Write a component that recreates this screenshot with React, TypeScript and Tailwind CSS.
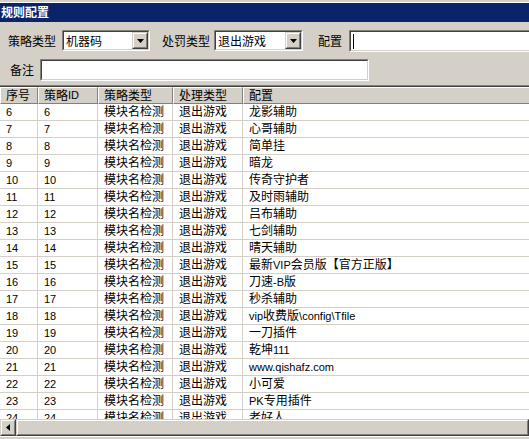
import React from "react";

const CJK = /([\u2E80-\u9FFF\u3000-\u303F\uFF00-\uFFEF]+)/;

function T({ s }: { s: string }) {
  const parts = s.split(CJK).filter((p) => p.length > 0);
  return (
    <>
      {parts.map((p, i) =>
        CJK.test(p) ? (
          <span key={i} className="text-[12px]">
            {p}
          </span>
        ) : (
          <span key={i} className="text-[11px]">
            {p}
          </span>
        )
      )}
    </>
  );
}

function Sunken({ className, children }: { className: string; children?: React.ReactNode }) {
  return (
    <div className={`border-t border-l border-t-[#808080] border-l-[#808080] border-b border-r border-b-white border-r-white ${className}`}>
      <div className="w-full h-full border-t border-l border-t-[#404040] border-l-[#404040] border-b border-r border-b-[#d4d0c8] border-r-[#d4d0c8] bg-white relative flex items-center">
        {children}
      </div>
    </div>
  );
}

function Raised({ className, children }: { className: string; children?: React.ReactNode }) {
  return (
    <div className={`border-t border-l border-t-[#d4d0c8] border-l-[#d4d0c8] border-b border-r border-b-[#404040] border-r-[#404040] ${className}`}>
      <div className="w-full h-full border-t border-l border-t-white border-l-white border-b border-r border-b-[#808080] border-r-[#808080] bg-[#d4d0c8] flex items-center justify-center">
        {children}
      </div>
    </div>
  );
}

function Combo({ value, w }: { value: string; w: string }) {
  return (
    <Sunken className={`${w} h-[21px] shrink-0`}>
      <span className="pl-[2px] leading-none flex-1 whitespace-nowrap">
        <T s={value} />
      </span>
      <Raised className="w-[16px] h-[17px] shrink-0">
        <svg width="7" height="4" viewBox="0 0 7 4">
          <path d="M0 0h7L3.5 4z" fill="#000" />
        </svg>
      </Raised>
    </Sunken>
  );
}

const widths = ["w-[38px]", "w-[60px]", "w-[75px]", "w-[70px]"];

const rows: [string, string][] = [
  ["6", "龙影辅助"],
  ["7", "心哥辅助"],
  ["8", "简单挂"],
  ["9", "暗龙"],
  ["10", "传奇守护者"],
  ["11", "及时雨辅助"],
  ["12", "吕布辅助"],
  ["13", "七剑辅助"],
  ["14", "晴天辅助"],
  ["15", "最新VIP会员版【官方正版】"],
  ["16", "刀速-B版"],
  ["17", "秒杀辅助"],
  ["18", "vip收费版\\config\\Tfile"],
  ["19", "一刀插件"],
  ["20", "乾坤111"],
  ["21", "www.qishafz.com"],
  ["22", "小可爱"],
  ["23", "PK专用插件"],
  ["24", "老好人"],
];

export default function App() {
  const font = { fontFamily: 'Tahoma, "Liberation Sans", "Noto Sans CJK SC", sans-serif' };
  return (
    <div
      className="w-[529px] h-[439px] overflow-hidden bg-[#d4d0c8] text-black flex flex-col"
      style={font}
    >
      <div className="h-[2px] bg-[#d4d0c8] shrink-0" />
      <div className="h-px bg-white shrink-0" />
      <div className="h-[19px] bg-[#0a246a] text-white font-bold text-[12px] flex items-center pl-[1px] shrink-0 whitespace-nowrap">
        规则配置
      </div>

      {/* form */}
      <div className="h-[8px] shrink-0" />
      <div className="h-[21px] flex items-center shrink-0">
        <span className="ml-[8px] w-[48px] shrink-0 whitespace-nowrap leading-none">
          <T s="策略类型" />
        </span>
        <div className="w-[6px] shrink-0" />
        <Combo value="机器码" w="w-[88px]" />
        <span className="ml-[12px] w-[48px] shrink-0 whitespace-nowrap leading-none">
          <T s="处罚类型" />
        </span>
        <div className="w-[4px] shrink-0" />
        <Combo value="退出游戏" w="w-[89px]" />
        <span className="ml-[15px] w-[24px] shrink-0 whitespace-nowrap leading-none">
          <T s="配置" />
        </span>
        <div className="w-[7px] shrink-0" />
        <Sunken className="w-[200px] h-[22px] shrink-0">
          <div className="absolute left-[2px] top-[2px] w-px h-[15px] bg-black" />
        </Sunken>
      </div>
      <div className="h-[8px] shrink-0" />
      <div className="h-[22px] flex items-center shrink-0">
        <span className="ml-[10px] w-[24px] shrink-0 whitespace-nowrap leading-none">
          <T s="备注" />
        </span>
        <div className="w-[6px] shrink-0" />
        <Sunken className="w-[329px] h-[22px] shrink-0" />
      </div>
      <div className="h-[4px] shrink-0" />

      {/* grid */}
      <div className="flex-1 flex flex-col border-t border-t-[#808080] min-h-0">
        <div className="flex-1 flex flex-col border-t border-t-[#404040] min-h-0">
          {/* header */}
          <div className="h-[17px] flex shrink-0 bg-[#d4d0c8]">
            {["序号", "策略ID", "策略类型", "处理类型"].map((h, i) => (
              <div
                key={h}
                className={`${widths[i]} shrink-0 h-full border-t border-l border-t-white border-l-white border-b border-r border-b-[#808080] border-r-[#808080] pl-[5px] flex items-center leading-none whitespace-nowrap`}
              >
                <T s={h} />
              </div>
            ))}
            <div className="flex-1 h-full border-t border-l border-t-white border-l-white border-b border-b-[#808080] pl-[5px] flex items-center leading-none whitespace-nowrap">
              <T s="配置" />
            </div>
          </div>
          {/* body */}
          <div className="flex-1 bg-white overflow-hidden min-h-0">
            {rows.map(([n, cfg]) => (
              <div key={n} className="h-[17px] flex border-b border-b-[#d4d0c8]">
                {[n, n, "模块名检测", "退出游戏"].map((c, i) => (
                  <div
                    key={i}
                    className={`${widths[i]} shrink-0 h-full border-r border-r-[#d4d0c8] pl-[6px] flex items-center leading-none whitespace-nowrap`}
                  >
                    <T s={c} />
                  </div>
                ))}
                <div className="flex-1 h-full pl-[6px] flex items-center leading-none whitespace-nowrap">
                  <T s={cfg} />
                </div>
              </div>
            ))}
          </div>
          {/* scrollbar */}
          <div className="h-[17px] flex shrink-0 bg-[#d4d0c8]">
            <Raised className="w-[16px] h-[17px] shrink-0">
              <svg width="4" height="7" viewBox="0 0 4 7">
                <path d="M4 0v7L0 3.5z" fill="#000" />
              </svg>
            </Raised>
            <Raised className="flex-1 h-[17px]" />
          </div>
          <div className="h-px bg-white shrink-0" />
          <div className="h-[2px] bg-[#d4d0c8] shrink-0" />
        </div>
      </div>
    </div>
  );
}
